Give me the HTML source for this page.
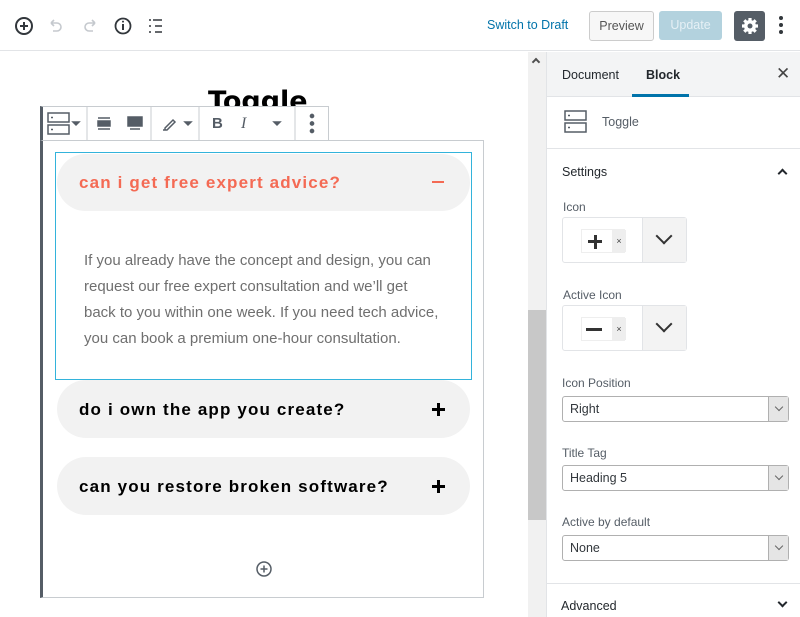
<!DOCTYPE html>
<html><head><style>
*{box-sizing:border-box;margin:0;padding:0}
body{width:800px;height:617px;overflow:hidden;background:#fff;font-family:"Liberation Sans",sans-serif;position:relative;color:#23282d}
.a{position:absolute}
.q{font-weight:bold;font-size:17px;letter-spacing:1.15px;font-family:"Liberation Sans",sans-serif}
.lbl{font-size:12px;color:#555d66}
.sel{position:absolute;left:562px;width:227px;height:26px;border:1px solid #b0b0b0;border-radius:3px;font-size:12.5px;color:#32373c;padding:5px 7px;background:#fff}
.sel:after{content:"";position:absolute;right:0;top:0;width:19px;height:24px;background:#e5e5e5;border-left:1px solid #b0b0b0}
.sel i{position:absolute;right:6px;top:7px;width:6px;height:6px;border-right:1px solid #666;border-bottom:1px solid #666;transform:rotate(45deg);z-index:2}
.ibox{position:absolute;left:562px;width:125px;height:46px;border:1px solid #e2e4e7;border-radius:3px}
.ibox .l{position:absolute;left:18px;top:11px;width:44px;height:24px;background:#fff;border:1px solid #eee}
.ibox .x{position:absolute;left:30px;top:0;width:14px;height:22px;background:#eee;font-size:9px;text-align:center;line-height:22px;color:#444}
.ibox .r{position:absolute;left:79px;top:0;width:44px;height:44px;background:#f3f3f3;border-left:1px solid #e2e4e7}
</style></head><body>
<div class="a" style="left:0;top:0;width:800px;height:51px;border-bottom:1px solid #e2e4e7"></div>
<svg class="a" style="left:12px;top:14px" width="150" height="24" viewBox="0 0 150 24" fill="none" stroke-width="2">
<circle cx="12" cy="12" r="8" stroke="#32373c"/><path d="M12 8v8M8 12h8" stroke="#32373c"/>
<path d="M39 9h6a4 4 0 0 1 0 8h-4M39 9l3-3M39 9l3 3" stroke="#c5c9ce" stroke-width="1.6"/>
<path d="M83 9h-6a4 4 0 0 0 0 8h4M83 9l-3-3M83 9l-3 3" stroke="#c5c9ce" stroke-width="1.6"/>
<circle cx="111" cy="12" r="7.5" stroke="#32373c" stroke-width="1.8"/><path d="M111 10v6" stroke="#32373c"/><circle cx="111" cy="7.6" r="1" fill="#32373c" stroke="none"/>
<path d="M137 6h2M137 12h2M137 18h2M141 6h10M143 12h8M143 18h8" stroke="#32373c" stroke-width="1.6"/>
</svg>
<div class="a" style="left:487px;top:18px;font-size:12.5px;color:#0073aa">Switch to Draft</div>
<div class="a" style="left:589px;top:11px;width:65px;height:30px;border:1px solid #ccc;border-radius:3px;background:#f7f7f7;font-size:12.5px;color:#555;text-align:center;line-height:29px">Preview</div>
<div class="a" style="left:659px;top:11px;width:63px;height:29px;border-radius:3px;background:#b3d2de;font-size:12.5px;color:#e5f0f5;text-align:center;line-height:29px">Update</div>
<div class="a" style="left:734px;top:11px;width:31px;height:30px;border-radius:3px;background:#555d66"></div>
<svg class="a" style="left:740px;top:16px" width="20" height="20" viewBox="0 0 20 20"><g fill="#fff"><circle cx="10" cy="10" r="6"/><g stroke="#fff" stroke-width="3.2"><path d="M10 2v16M2 10h16M4.3 4.3l11.4 11.4M15.7 4.3L4.3 15.7"/></g></g><circle cx="10" cy="10" r="2.5" fill="#555d66"/></svg>
<svg class="a" style="left:777px;top:15px" width="8" height="20"><circle cx="4" cy="3" r="2" fill="#32373c"/><circle cx="4" cy="10" r="2" fill="#32373c"/><circle cx="4" cy="17" r="2" fill="#32373c"/></svg>
<div class="a" style="left:528px;top:52px;width:18px;height:565px;background:#f1f1f1"></div>
<div class="a" style="left:528px;top:310px;width:18px;height:210px;background:#c8c8c8"></div>
<div class="a" style="left:533px;top:59px;width:6px;height:6px;border-left:2px solid #505050;border-top:2px solid #505050;transform:rotate(45deg)"></div>
<div class="a" style="left:546px;top:52px;width:254px;height:565px;border-left:1px solid #e2e4e7"></div>
<div class="a" style="left:547px;top:52px;width:253px;height:45px;background:#f3f4f5;border-bottom:1px solid #e2e4e7"></div>
<div class="a" style="left:562px;top:68px;font-size:12.5px;color:#23282d">Document</div>
<div class="a" style="left:646px;top:68px;font-size:12.5px;color:#23282d;font-weight:bold">Block</div>
<div class="a" style="left:632px;top:94px;width:57px;height:3px;background:#0073aa"></div>
<div class="a" style="left:776px;top:64px;font-size:17px;color:#444">✕</div>
<svg class="a" style="left:564px;top:110px" width="24" height="24" fill="none" stroke="#555d66" stroke-width="1.5"><rect x="1" y="1" width="21" height="9"/><rect x="1" y="13" width="21" height="9"/><path d="M4 5.5h2M4 17.5h2"/></svg>
<div class="a" style="left:602px;top:115px;font-size:12.5px;color:#555d66">Toggle</div>
<div class="a" style="left:547px;top:148px;width:253px;border-top:1px solid #e2e4e7"></div>
<div class="a" style="left:562px;top:165px;font-size:12.5px;color:#23282d">Settings</div>
<div class="a" style="left:779px;top:170px;width:7px;height:7px;border-left:2px solid #23282d;border-top:2px solid #23282d;transform:rotate(45deg)"></div>
<div class="a lbl" style="left:563px;top:200px">Icon</div>
<div class="ibox" style="top:217px"><div class="l"><span class="a" style="left:6px;top:10px;width:14px;height:3px;background:#333"></span><span class="a" style="left:11.5px;top:4.5px;width:3px;height:14px;background:#333"></span><div class="x">×</div></div><div class="r"><span class="a" style="left:15px;top:12px;width:12px;height:12px;border-right:2px solid #333;border-bottom:2px solid #333;transform:rotate(45deg)"></span></div></div>
<div class="a lbl" style="left:563px;top:288px">Active Icon</div>
<div class="ibox" style="top:305px"><div class="l"><span class="a" style="left:4px;top:10px;width:16px;height:3px;background:#333"></span><div class="x">×</div></div><div class="r"><span class="a" style="left:15px;top:12px;width:12px;height:12px;border-right:2px solid #333;border-bottom:2px solid #333;transform:rotate(45deg)"></span></div></div>
<div class="a lbl" style="left:562px;top:376px">Icon Position</div>
<div class="sel" style="top:396px">Right<i></i></div>
<div class="a lbl" style="left:562px;top:446px">Title Tag</div>
<div class="sel" style="top:465px">Heading 5<i></i></div>
<div class="a lbl" style="left:562px;top:515px">Active by default</div>
<div class="sel" style="top:535px">None<i></i></div>
<div class="a" style="left:547px;top:583px;width:253px;border-top:1px solid #e2e4e7"></div>
<div class="a" style="left:561px;top:599px;font-size:12.5px;color:#23282d">Advanced</div>
<div class="a" style="left:779px;top:599px;width:7px;height:7px;border-right:2px solid #23282d;border-bottom:2px solid #23282d;transform:rotate(45deg)"></div>
<div class="a" style="left:208px;top:86px;font-size:27px;font-weight:bold;color:#000;font-family:'DejaVu Sans',sans-serif;height:21px;overflow:hidden">Toggle</div>
<div class="a" style="left:40px;top:140px;width:444px;height:458px;border:1px solid #c8ccd0;border-left:3px solid #555d66"></div>
<div class="a" style="left:40px;top:106px;width:289px;height:35px;background:#fff;border:1px solid #c8ccd0;border-left:3px solid #555d66"></div>
<svg class="a" style="left:42px;top:106px" width="288" height="35" fill="none" stroke="#555d66" stroke-width="1.5">
<rect x="6" y="7" width="21" height="9"/><rect x="6" y="19" width="21" height="9"/><path d="M9 11.5h2M9 23.5h2"/><path d="M31 16l3 3 3-3z" fill="#555d66"/>
<path d="M45 0v35M109 0v35M157 0v35M253 0v35" stroke="#c8ccd0" stroke-width="1"/>
<path d="M56 12h12M56 23h12" /><rect x="56" y="15" width="12" height="5" fill="#555d66"/>
<rect x="86" y="11" width="14" height="9" fill="#555d66"/><path d="M88 23h10"/>
<path d="M123 22l8-8 2 2-8 8h-2zM121 24h2" /><path d="M143 16l3 3 3-3z" fill="#555d66"/>
<path d="M232 16l3 3 3-3z" fill="#555d66"/>
<circle cx="270" cy="10" r="1.6" fill="#555d66"/><circle cx="270" cy="17.5" r="1.6" fill="#555d66"/><circle cx="270" cy="25" r="1.6" fill="#555d66"/>
</svg>
<div class="a" style="left:212px;top:115px;font-size:15px;font-weight:bold;color:#555d66">B</div>
<div class="a" style="left:241px;top:115px;font-size:16px;font-style:italic;color:#555d66;font-family:'Liberation Serif',serif">I</div>
<div class="a" style="left:55px;top:152px;width:417px;height:228px;border:1px solid #33b3db"></div>
<div class="a" style="left:57px;top:154px;width:413px;height:57px;border-radius:29px;background:#f2f2f2"></div>
<div class="a q" style="left:79px;top:173px;color:#f46a54">can i get free expert advice?</div>
<div class="a" style="left:432px;top:181px;width:12px;height:2px;background:#f46a54"></div>
<div class="a" style="left:84px;top:248px;width:358px;font-size:15px;line-height:26px;color:#6f6f6f">If you already have the concept and design, you can request our free expert consultation and we’ll get back to you within one week. If you need tech advice, you can book a premium one-hour consultation.</div>
<div class="a" style="left:57px;top:380px;width:413px;height:58px;border-radius:29px;background:#f2f2f2"></div>
<div class="a q" style="left:79px;top:400px;color:#000">do i own the app you create?</div>
<div class="a" style="left:432px;top:408px;width:13px;height:2.5px;background:#000"></div><div class="a" style="left:437.3px;top:402.7px;width:2.5px;height:13px;background:#000"></div>
<div class="a" style="left:57px;top:457px;width:413px;height:58px;border-radius:29px;background:#f2f2f2"></div>
<div class="a q" style="left:79px;top:477px;color:#000">can you restore broken software?</div>
<div class="a" style="left:432px;top:485px;width:13px;height:2.5px;background:#000"></div><div class="a" style="left:437.3px;top:479.7px;width:2.5px;height:13px;background:#000"></div>
<svg class="a" style="left:255px;top:560px" width="18" height="18" fill="none" stroke="#555d66" stroke-width="1.5"><circle cx="9" cy="9" r="7"/><path d="M9 5.5v7M5.5 9h7"/></svg>
</body></html>
